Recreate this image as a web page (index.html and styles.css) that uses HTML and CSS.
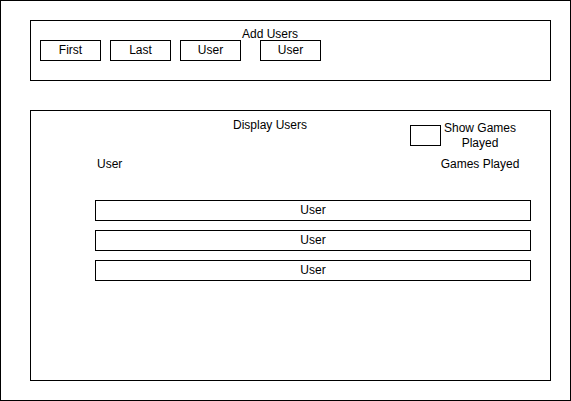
FILE: index.html
```html
<!DOCTYPE html>
<html lang="en">
<head>
	<meta charset="utf-8" />
	<title>Users</title>
	<link rel="stylesheet" href="styles.css">
</head>
<body>
<div class="frame">

	<section class="add-box">
		<div class="title">Add Users</div>
		<div class="fields">
			<div class="field">First</div>
			<div class="field">Last</div>
			<div class="field">User</div>
			<div class="field wide-gap">User</div>
		</div>
	</section>

	<section class="display-box">
		<div class="display-head">
			<div class="title">Display Users</div>
			<div class="check"></div>
			<div class="check-label">Show Games Played</div>
		</div>
		<div class="columns">
			<div class="col-user">User</div>
			<div class="col-games">Games Played</div>
		</div>
		<div class="user-list">
			<div class="user-row">User</div>
			<div class="user-row">User</div>
			<div class="user-row">User</div>
		</div>
	</section>

</div>
</body>
</html>
```

FILE: styles.css
```css
*{
	box-sizing: border-box;
}

body{
	margin:0;
	font-family: "Liberation Sans", Helvetica, Arial, sans-serif;
	font-size:12px;
	color:#000;
	background:#fff;
}

.frame{
	width:571px;
	height:401px;
	border:1px solid #000;
	padding:19px 0 0 29px;
}

/* add users */
.add-box{
	width:521px;
	height:61px;
	border:1px solid #000;
}

.title{
	width:100px;
	margin-left:189px;
	text-align:center;
	line-height:14.4px;
}

.add-box .title{
	margin-top:6px;
	height:12px;
}

.fields{
	display:flex;
	gap:9px;
	margin-top:1px;
	padding-left:9px;
}

.field{
	width:61px;
	height:21px;
	border:1px solid #000;
	text-align:center;
	line-height:19px;
}

.field.wide-gap{
	margin-left:10px;
}

/* display users */
.display-box{
	width:521px;
	height:271px;
	margin-top:29px;
	border:1px solid #000;
}

.display-head{
	display:flex;
	align-items:flex-start;
	height:46px;
}

.display-head .title{
	margin-top:7px;
}

.check{
	width:31px;
	height:21px;
	margin:14px 0 0 90px;
	border:1px solid #000;
}

.check-label{
	width:76px;
	margin:10px 0 0 1px;
	text-align:center;
	line-height:15px;
}

.columns{
	display:flex;
	height:15px;
	line-height:14.4px;
	padding-left:66px;
}

.col-games{
	width:80px;
	margin-left:auto;
	margin-right:30px;
	text-align:center;
}

.user-list{
	display:flex;
	flex-direction:column;
	gap:9px;
	margin:28px 0 0 64px;
}

.user-row{
	width:436px;
	height:21px;
	border:1px solid #000;
	text-align:center;
	line-height:19px;
}
```
